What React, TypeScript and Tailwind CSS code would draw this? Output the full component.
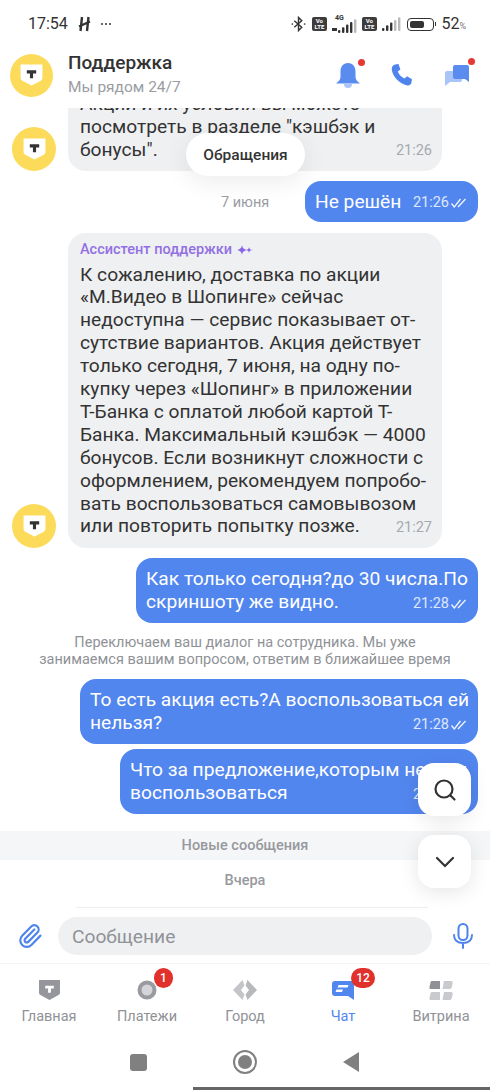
import React from "react";
import { Paperclip } from "lucide-react";

const Logo = ({ cls }: { cls: string }) => (
  <div className={`rounded-full bg-[#fcdb5a] flex items-center justify-center shrink-0 ${cls}`}>
    <svg viewBox="0 0 24 23" className="w-[25px] h-[24px]">
      <path d="M1.5 1.5h21v12.5c0 1.6-.6 2.6-2 3.2l-8.5 4.3-8.5-4.3c-1.4-.6-2-1.6-2-3.2z" fill="#fff" />
      <path d="M7.500 7h9v3h-3v4.500h-3V10h-3z" fill="#333" />
    </svg>
  </div>
);

const Checks = () => (
  <svg viewBox="0 0 16 10" className="w-[17px] h-[10px] ml-[1px]" fill="none" stroke="#fff" strokeOpacity="0.92" strokeWidth="1.3">
    <path d="M1 5.500 3.800 9 10 1" />
    <path d="M7.500 9 15 1" />
  </svg>
);

const Time = ({ t, out }: { t: string; out?: boolean }) => (
  <span className={`absolute flex items-center text-[14.5px] leading-[18px] ${out ? "right-[11px] bottom-[10px] text-white/80" : "right-[10px] bottom-[11px] text-[#a6a9ae]"}`}>
    {t}
    {out && <Checks />}
  </span>
);

const Lines = ({ lines }: { lines: string[] }) => (
  <>
    {lines.map((l) => (
      <div key={l} className="whitespace-nowrap">{l}</div>
    ))}
  </>
);

const Signal = ({ dim }: { dim: number }) => (
  <svg viewBox="0 0 19 14" className="w-[19px] h-[14px]">
    {[0, 1, 2, 3, 4].map((i) => (
      <rect key={i} x={i * 4} y={11 - i * 2.7} width="2.400" height={3 + i * 2.7} rx="1" fill={i >= dim ? "#b9b9b9" : "#333"} />
    ))}
  </svg>
);

const Volte = () => (
  <div className="w-[15px] h-[14px] rounded-[2px] bg-[#3c3c3c] text-white flex flex-col items-center justify-center text-[6px] leading-[6px] font-bold">
    <span>Vo</span>
    <span>LTE</span>
  </div>
);

const Status = () => (
  <div className="h-[46px] shrink-0 flex items-center pl-[28px] pr-[24px] text-[#333] text-[16px] pt-[2px]">
    <span>17:54</span>
    <svg viewBox="0 0 13 16" className="w-[13px] h-[16px] ml-[10px]" fill="none" stroke="#333" strokeWidth="2.400">
      <path d="M4 1 2.500 15M10.500 1 9 15M1 10.500l11-5" />
    </svg>
    <span className="ml-[10px] flex gap-[2px]">
      <i className="w-[2px] h-[2px] rounded-full bg-[#333]" />
      <i className="w-[2px] h-[2px] rounded-full bg-[#333]" />
      <i className="w-[2px] h-[2px] rounded-full bg-[#333]" />
    </span>
    <div className="ml-auto flex items-center">
      <svg viewBox="0 0 16 16" className="w-[15px] h-[16px]" fill="none" stroke="#333" strokeWidth="1.5">
        <path d="M3.5 4.5l8 7-3.5 3.500v-14l3.500 3.500-8 7" />
        <circle cx="1.5" cy="8" r="0.9" fill="#333" stroke="none" />
        <circle cx="14.5" cy="8" r="0.9" fill="#333" stroke="none" />
      </svg>
      <div className="ml-[6px]"><Volte /></div>
      <div className="relative ml-[5px] w-[26px] h-[18px]">
        <span className="absolute left-[3px] top-[-1px] text-[7px] leading-[8px] font-bold">4G</span>
        <div className="absolute left-[6px] bottom-0"><Signal dim={4} /></div>
        <i className="absolute left-0 bottom-[2px] w-[5px] h-[3px] bg-[#333]" />
      </div>
      <div className="ml-[4px]"><Volte /></div>
      <div className="ml-[5px]"><Signal dim={3} /></div>
      <div className="ml-[6px] flex items-center gap-[1px]">
        <div className="w-[27px] h-[13px] rounded-[4px] border border-[#333] p-[2px]">
          <div className="h-full w-[14px] rounded-[2px] bg-[#333]" />
        </div>
        <i className="w-[1.5px] h-[4px] bg-[#333]" />
      </div>
      <span className="ml-[5px] text-[16px]">52<span className="text-[9px] text-[#777]">%</span></span>
    </div>
  </div>
);

const Header = () => (
  <div className="h-[62px] shrink-0 flex items-center pl-[10px] pr-[21px] pb-[4px]">
    <Logo cls="w-[43px] h-[43px]" />
    <div className="ml-[15px]">
      <div className="text-[19px] leading-[22px] text-[#333] font-medium -mt-[1px]">Поддержка</div>
      <div className="text-[15.5px] leading-[22px] mt-[2px] text-[#9a9da3]">Мы рядом 24/7</div>
    </div>
    <div className="ml-auto flex items-center">
      <div className="relative w-[24px] h-[27px]">
        <svg viewBox="0 0 24 27" className="w-[24px] h-[27px]">
          <path d="M8 22h8a4 4 0 0 1-8 0z" fill="#a9c4f6" />
          <path d="M12 1c5 0 7.500 4 7.500 8.500V15c0 2.500 2 4.500 4.500 6.500H0c2.500-2 4.500-4 4.500-6.500V9.500C4.500 5 7 1 12 1z" fill="#5a8cf0" />
        </svg>
        <i className="absolute right-[-5px] top-[-3px] w-[7px] h-[7px] rounded-full bg-[#e53935]" />
      </div>
      <svg viewBox="0 0 24 24" className="w-[24px] h-[24px] ml-[30px]" fill="#4f84ec">
        <path d="M5 1.500 8.500 1c.6 1.800 1.300 3.700 1.900 5.500l-2.600 2c1.100 3 3.700 5.700 6.800 7l2.400-2.300 5 3-.6 3.500c-.5 2-2.300 3-4.200 2.700C9.500 21 2.600 13.500 1.800 6.500 1.500 4 2.900 2 5 1.500z" />
      </svg>
      <div className="relative w-[24px] h-[24px] ml-[31px]">
        <svg viewBox="0 0 24 24" className="w-[24px] h-[24px]">
          <path d="M2 8h13a2 2 0 0 1 2 2v7a2 2 0 0 1-2 2H5l-5 4V10a2 2 0 0 1 2-2z" fill="#a9c4f6" />
          <path d="M10 2h12a2 2 0 0 1 2 2v15l-4-3H10a2 2 0 0 1-2-2V4a2 2 0 0 1 2-2z" fill="#5a8cf0" />
        </svg>
        <i className="absolute right-[-6px] top-[-5px] w-[7px] h-[7px] rounded-full bg-[#e53935]" />
      </div>
    </div>
  </div>
);

const Chat = () => (
  <div className="relative flex-1 min-h-0 overflow-hidden flex flex-col justify-end text-[19.2px] leading-[23px]">
    <div className="shrink-0">
      <div className="flex items-end pl-[12px] pr-[48px]">
        <Logo cls="w-[44px] h-[44px]" />
        <div className="relative ml-[12px] w-[374px] rounded-[18px] bg-[#eff0f2] px-[12px] pb-[10px] text-[#333]">
          <Lines lines={["Акции и их условия вы можете", 'посмотреть в разделе "кэшбэк и', 'бонусы".']} />
          <Time t="21:26" />
        </div>
      </div>
      <div className="mt-[10px] flex justify-end pr-[12px]">
        <div className="relative w-[173px] h-[41px] rounded-[16px] bg-[#5286ef] text-white px-[10px] pt-[9px]">
          Не решён
          <Time t="21:26" out />
        </div>
      </div>
      <div className="mt-[11px] flex items-end pl-[12px] pr-[48px]">
        <Logo cls="w-[44px] h-[44px]" />
        <div className="relative ml-[12px] w-[374px] h-[315px] rounded-[18px] bg-[#eff0f2] px-[12px] pt-[8px] text-[#333] leading-[22.9px]">
          <div className="flex items-center gap-[5px] text-[14.5px] leading-[18px] font-medium text-[#9270e3] mb-[4.500px]">
            Ассистент поддержки
            <svg viewBox="0 0 16 10" className="w-[16px] h-[10px]" fill="#8a63e8">
              <path d="M5 0c.5 3 1.500 4.200 5 5-3.500.8-4.500 2-5 5-.5-3-1.500-4.200-5-5 3.500-.8 4.500-2 5-5z" />
              <path d="M12 2c.3 2 1 2.700 4 3-3 .3-3.700 1-4 3-.3-2-1-2.700-4-3 3-.3 3.700-1 4-3z" />
            </svg>
          </div>
          <Lines
            lines={[
              "К сожалению, доставка по акции",
              "«М.Видео в Шопинге» сейчас",
              "недоступна — сервис показывает от-",
              "сутствие вариантов. Акция действует",
              "только сегодня, 7 июня, на одну по-",
              "купку через «Шопинг» в приложении",
              "Т-Банка с оплатой любой картой Т-",
              "Банка. Максимальный кэшбэк — 4000",
              "бонусов. Если возникнут сложности с",
              "оформлением, рекомендуем попробо-",
              "вать воспользоваться самовывозом",
              "или повторить попытку позже.",
            ]}
          />
          <Time t="21:27" />
        </div>
      </div>
      <div className="mt-[10px] flex justify-end pr-[12px]">
        <div className="relative w-[342px] h-[65px] rounded-[16px] bg-[#5286ef] text-white pl-[10px] pt-[9px]">
          <Lines lines={["Как только сегодня?до 30 числа.По", "скриншоту же видно."]} />
          <Time t="21:28" out />
        </div>
      </div>
      <div className="mt-[6px] h-[44px] text-center text-[14.5px] leading-[17px] text-[#8f9297] flex flex-col justify-center">
        <div>Переключаем ваш диалог на сотрудника. Мы уже</div>
        <div>занимаемся вашим вопросом, ответим в ближайшее время</div>
      </div>
      <div className="mt-[6px] flex justify-end pr-[12px]">
        <div className="relative w-[398px] h-[65px] rounded-[16px] bg-[#5286ef] text-white pl-[10px] pt-[9px]">
          <Lines lines={["То есть акция есть?А воспользоваться ей", "нельзя?"]} />
          <Time t="21:28" out />
        </div>
      </div>
      <div className="mt-[5px] flex justify-end pr-[12px]">
        <div className="relative w-[358px] h-[65px] rounded-[16px] bg-[#5286ef] text-white pl-[10px] pt-[9px]">
          <Lines lines={["Что за предложение,которым нельзя", "воспользоваться"]} />
          <Time t="21:28" out />
        </div>
      </div>
      <div className="mt-[17px] h-[29px] bg-[#f5f6f8] flex items-center justify-center text-[14.5px] font-medium text-[#97999e]">
        Новые сообщения
      </div>
      <div className="h-[40px] flex items-center justify-center text-[14.5px] font-medium text-[#97999e]">Вчера</div>
      <div className="h-[8px]" />
    </div>

    <div className="absolute left-[186px] top-[25px] w-[119px] h-[43px] rounded-full bg-white flex items-center justify-center text-[15.5px] leading-[20px] font-medium text-[#333] shadow-[0_6px_24px_rgba(0,0,0,0.08)]">
      Обращения
    </div>
    <div className="absolute left-[221px] top-[85px] text-[14.5px] leading-[20px] text-[#9a9da3]">7 июня</div>
    <div className="absolute left-[418px] top-[655px] w-[53px] h-[53px] rounded-[16px] bg-white flex items-center justify-center shadow-[0_4px_20px_rgba(0,0,0,0.1)]">
      <svg viewBox="0 0 24 24" className="w-[24px] h-[24px]" fill="none" stroke="#333" strokeWidth="2.200" strokeLinecap="round">
        <circle cx="11" cy="11" r="8.500" />
        <path d="M17.500 17.500l4 4" />
      </svg>
    </div>
    <div className="absolute left-[418px] top-[727px] w-[53px] h-[53px] rounded-[16px] bg-white flex items-center justify-center shadow-[0_4px_20px_rgba(0,0,0,0.1)]">
      <svg viewBox="0 0 20 12" className="w-[20px] h-[12px]" fill="none" stroke="#333" strokeWidth="2.200" strokeLinecap="round">
        <path d="M2 2l8 8 8-8" />
      </svg>
    </div>
  </div>
);

const InputBar = () => (
  <div className="h-[56px] shrink-0 flex items-center border-b border-[#f3f4f5] pl-[17px] pr-[17px] relative">
    <div className="absolute left-[76px] right-[62px] top-[-1px] h-[1px] bg-[#eceef0]" />
    <Paperclip className="w-[26px] h-[26px] text-[#4f84ec]" strokeWidth={2} />
    <div className="ml-[15px] w-[374px] h-[38px] rounded-full bg-[#eff0f2] flex items-center pl-[14px] pt-[3px] text-[19.2px] text-[#8f9297]">
      Сообщение
    </div>
    <svg viewBox="0 0 20 26" className="ml-auto w-[20px] h-[26px]" fill="none" stroke="#4f84ec" strokeWidth="2" strokeLinecap="round">
      <rect x="5.500" y="1" width="9" height="16" rx="4.500" />
      <path d="M1 12c0 5 3.500 8 9 8s9-3 9-8M10 20v5" />
    </svg>
  </div>
);

const Tab = ({ icon, label, badge, active }: { icon: React.ReactNode; label: string; badge?: string; active?: boolean }) => (
  <div className="w-[98px] flex flex-col items-center">
    <div className="relative w-[26px] h-[26px] flex items-center justify-center">
      {icon}
      {badge && (
        <span className={`absolute top-[-9px] h-[20px] rounded-full bg-[#e0312c] text-white text-[12px] leading-[20px] text-center font-medium ${badge.length > 1 ? "left-[21px] w-[24px]" : "left-[20px] w-[19px]"}`}>
          {badge}
        </span>
      )}
    </div>
    <div className={`mt-[5px] text-[14.5px] leading-[18px] ${active ? "text-[#5286ef]" : "text-[#909297]"}`}>{label}</div>
  </div>
);

const Tabs = () => (
  <div className="h-[76px] shrink-0 flex pt-[13px]">
    <Tab
      label="Главная"
      icon={
        <svg viewBox="0 0 22 21" className="w-[21px] h-[20px]">
          <path d="M0 0h22v13c0 1.500-.5 2.300-2 3l-9 5-9-5c-1.500-.7-2-1.500-2-3z" fill="#94969b" />
          <path d="M6.500 6h9v3h-3v4.500h-3V9h-3z" fill="#fff" />
        </svg>
      }
    />
    <Tab
      label="Платежи"
      badge="1"
      icon={
        <svg viewBox="0 0 20 20" className="w-[20px] h-[20px]">
          <circle cx="10" cy="10" r="7.500" fill="#d4d5d9" stroke="#999ba0" strokeWidth="4" />
        </svg>
      }
    />
    <Tab
      label="Город"
      icon={
        <svg viewBox="0 0 24 20" className="w-[24px] h-[20px] shrink-0">
          <path d="M9.500 0 0 10l9.500 10 2-5.500L8 10l3.500-4.500z" fill="#c4c5c9" />
          <path d="M14.500 0 24 10l-9.500 10-2-5.500L16 10l-3.500-4.500z" fill="#b8b9bd" />
        </svg>
      }
    />
    <Tab
      label="Чат"
      active
      badge="12"
      icon={
        <svg viewBox="0 0 22 19" className="w-[22px] h-[19px] shrink-0">
          <path d="M3 0h16a3 3 0 0 1 3 3v16l-6-4H3a3 3 0 0 1-3-3V3a3 3 0 0 1 3-3z" fill="#5286ef" />
          <path d="M6.500 4h10l-1 2.600h-10zM4.500 8.500H11l-1 2.500H3.500z" fill="#fff" />
        </svg>
      }
    />
    <Tab
      label="Витрина"
      icon={
        <svg viewBox="0 0 24 19" className="w-[24px] h-[19px] shrink-0">
          <path d="M4 0h7v8H2a1.500 1.500 0 0 1-1.500-2l1-4.500A2 2 0 0 1 4 0z" fill="#8e9095" />
          <path d="M15 0h7c1.200 0 2 1 1.700 2l-1 4.500A2 2 0 0 1 21 8h-7.500z" fill="#c9cacd" />
          <path d="M4 11h7v8H2a1.500 1.500 0 0 1-1.500-2l1-4.500A2 2 0 0 1 4 11z" fill="#c9cacd" />
          <path d="M15 11h7c1.200 0 2 1 1.700 2l-1 4.500A2 2 0 0 1 21 19h-7.500z" fill="#c9cacd" />
        </svg>
      }
    />
  </div>
);

const Nav = () => (
  <div className="h-[50px] shrink-0 flex items-center pb-[6px] relative">
    <div className="ml-[130px] w-[17px] h-[17px] rounded-[3px] bg-[#808080]" />
    <div className="ml-[86px] w-[24px] h-[24px] rounded-full border-[2px] border-[#808080] flex items-center justify-center">
      <div className="w-[14px] h-[14px] rounded-full bg-[#808080]" />
    </div>
    <svg viewBox="0 0 16 20" className="ml-[86px] w-[16px] h-[20px]">
      <path d="M16 0v20L0 10z" fill="#808080" />
    </svg>
    <div className="absolute left-[193px] right-0 bottom-0 h-[3px] bg-[#666]" />
  </div>
);

export default function App() {
  return (
    <div className="w-[490px] h-[1090px] bg-white flex flex-col overflow-hidden font-[Roboto,sans-serif]">
      <Status />
      <Header />
      <Chat />
      <InputBar />
      <Tabs />
      <Nav />
    </div>
  );
}
